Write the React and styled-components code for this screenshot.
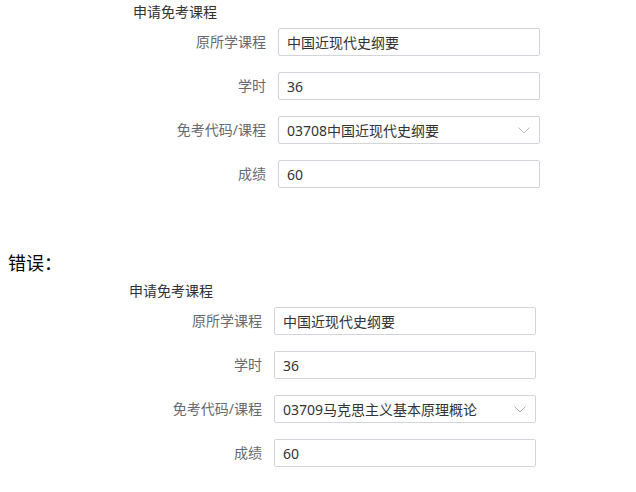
import React from "react";
import styled, { createGlobalStyle } from "styled-components";

const Global = createGlobalStyle`
  html, body { margin: 0; padding: 0; background: #fff; }
  body { font-family: "Noto Sans", "Noto Sans CJK SC", sans-serif; }
`;

const Page = styled.div`
  display: flex;
  flex-direction: column;
  width: 636px;
  height: 492px;
  overflow: hidden;
`;

const Form = styled.section`
  display: flex;
  flex-direction: column;
  margin-left: ${(p) => p.$left}px;
  margin-top: ${(p) => p.$top || 0}px;
`;

const Title = styled.div`
  height: 20px;
  line-height: 20px;
  padding-top: 2px;
  margin-bottom: 6px;
  font-size: 14px;
  color: #303133;
`;

const Rows = styled.div`
  display: grid;
  grid-template-columns: 133px 262px;
  column-gap: 12px;
  row-gap: 16px;
  align-items: center;
`;

const Label = styled.label`
  text-align: right;
  font-size: 14px;
  line-height: 28px;
  color: #666a70;
  white-space: nowrap;
`;

const Field = styled.div`
  box-sizing: border-box;
  height: 28px;
  display: flex;
  align-items: center;
  justify-content: space-between;
  padding: 0 9px 0 8px;
  border: 1px solid #d3d3dc;
  border-radius: 2px;
  font-size: 14px;
  color: #333;
  white-space: nowrap;
`;

const Chevron = styled.svg`
  width: 12px;
  height: 7px;
  flex: none;
`;

const Heading = styled.div`
  margin: 64px 0 0 8px;
  height: 22px;
  line-height: 22px;
  font-size: 18px;
  color: #000;
`;

function Select({ children }) {
  return (
    <Field>
      <span>{children}</span>
      <Chevron viewBox="0 0 12 7">
        <polyline points="0.5,0.5 6,6 11.5,0.5" fill="none" stroke="#b4b4c2" strokeWidth="1" />
      </Chevron>
    </Field>
  );
}

function ExemptForm({ left, top, course }) {
  return (
    <Form $left={left} $top={top}>
      <Title>申请免考课程</Title>
      <Rows>
        <Label>原所学课程</Label>
        <Field>中国近现代史纲要</Field>
        <Label>学时</Label>
        <Field>36</Field>
        <Label>免考代码/课程</Label>
        <Select>{course}</Select>
        <Label>成绩</Label>
        <Field>60</Field>
      </Rows>
    </Form>
  );
}

export default function App() {
  return (
    <Page>
      <Global />
      <ExemptForm left={133} course="03708中国近现代史纲要" />
      <Heading>错误：</Heading>
      <ExemptForm left={129} top={5} course="03709马克思主义基本原理概论" />
    </Page>
  );
}
